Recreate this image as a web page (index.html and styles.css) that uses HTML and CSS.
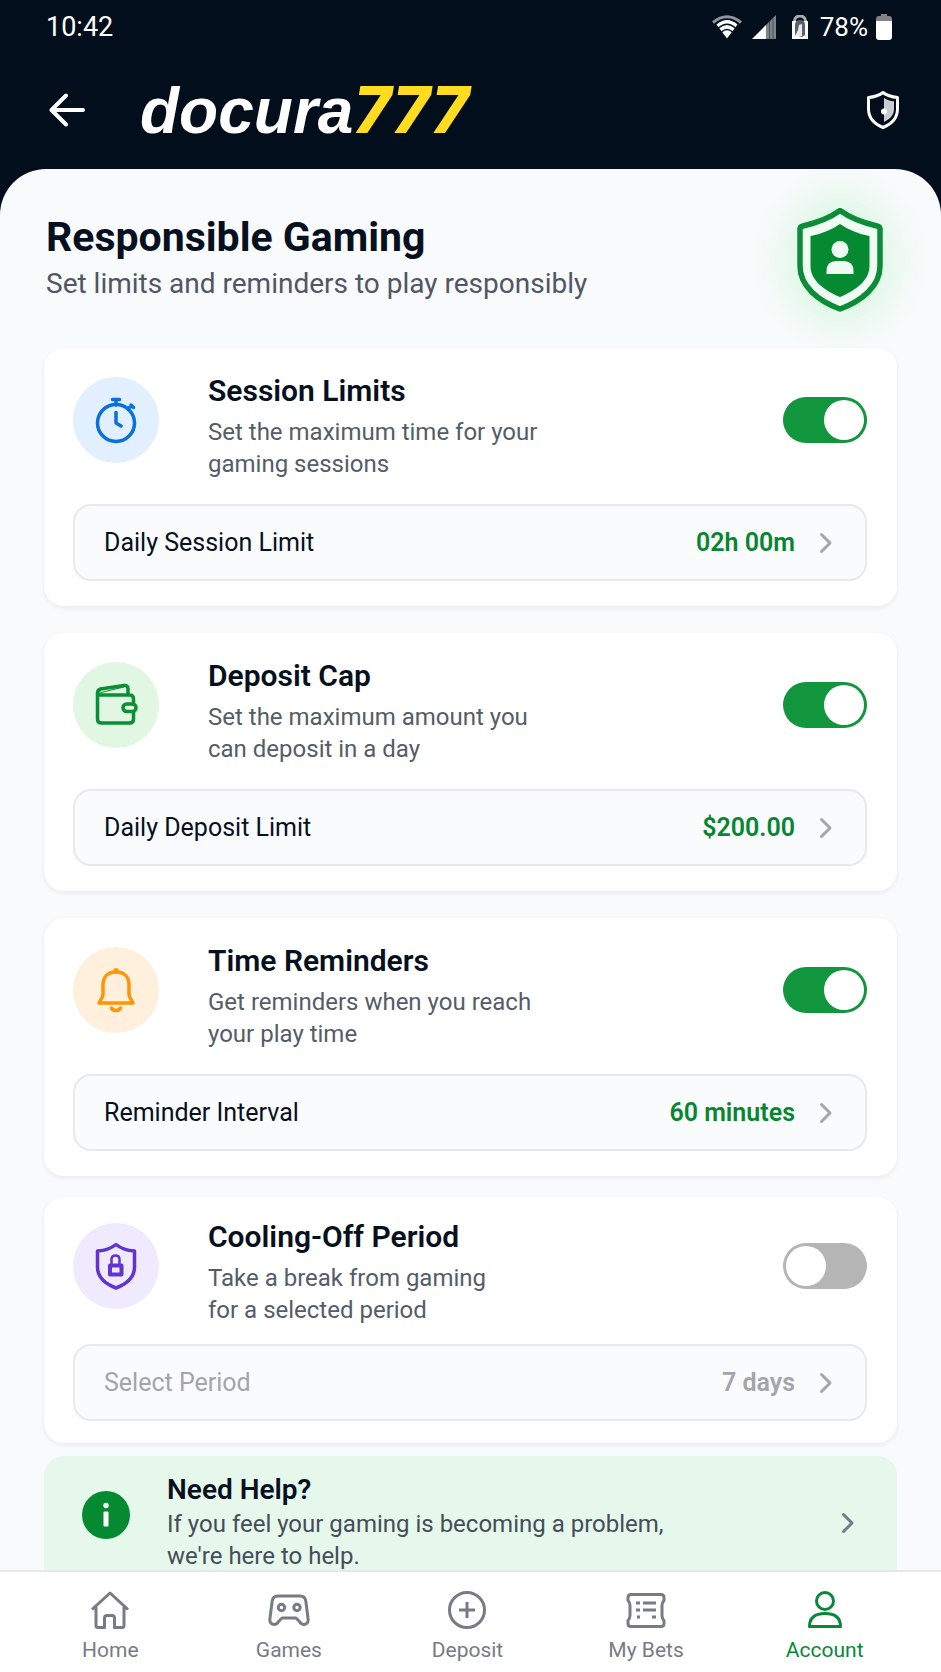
FILE: index.html
```html
<!DOCTYPE html>
<html lang="en">

<head>
    <meta charset="UTF-8">
    <meta name="viewport" content="width=device-width, initial-scale=1.0">
    <title>Responsible Gaming - docura777</title>
    <link rel="stylesheet" href="styles.css">
</head>

<body>
    <!-- Phone status bar -->
    <div class="status-bar">
        <span class="time">10:42</span>
        <div class="status-icons">
            <svg class="wifi" width="30" height="24" viewBox="0 0 30 24" fill="none">
                <path d="M1 7.500Q15-4 29 7.500" stroke="#8f959d" stroke-width="3" />
                <path d="M4.500 9.500Q15 .500 25.500 9.500L15 23.500z" fill="#fff" />
                <path d="M6.500 13Q15 5.500 23.500 13M9.500 17Q15 12 20.500 17" stroke="#04101f" stroke-width="1.300" />
            </svg>
            <svg class="signal" width="26" height="24" viewBox="0 0 26 24">
                <path d="M25 0v24H12V13z" fill="#7d838c" />
                <path d="M15 10v14H1z" fill="#fff" />
                <path d="M18.500 7v17M22 4v20" stroke="#4c535e" stroke-width="1" />
            </svg>
            <svg class="battery-saver" width="18" height="25" viewBox="0 0 18 25">
                <path d="M3.500 6a5.500 5 0 0 1 11 0" fill="none" stroke="#a9adb3" stroke-width="3" />
                <path d="M1 6h16v18H1z" fill="#fff" />
                <path d="M4 20V10q0-5 5-5t5 5v10l-3 2z" fill="#59616c" />
                <path d="M4 21l3-6 1-5 3-1v12z" fill="#e8e9eb" />
            </svg>
            <span>78%</span>
            <svg class="battery" width="16" height="26" viewBox="0 0 16 26">
                <path d="M5 0h6v2h2a3 3 0 0 1 3 3v3H0V5a3 3 0 0 1 3-3h2z" fill="#858087" />
                <path d="M0 7h16v16a3 3 0 0 1-3 3H3a3 3 0 0 1-3-3z" fill="#fff" />
            </svg>
        </div>
    </div>

    <!-- App header -->
    <header class="top-bar">
        <button class="icon-btn back" aria-label="Back">
            <svg width="36" height="34" viewBox="0 0 36 34" fill="none" stroke="#fff" stroke-width="4" stroke-linecap="round" stroke-linejoin="round">
                <path d="M34 17H3M17 2.500L2.500 17 17 31.500" />
            </svg>
        </button>
        <a class="logo" href="#">docura<span>777</span></a>
        <button class="icon-btn" aria-label="Security">
            <svg width="34" height="40" viewBox="0 0 34 40" fill="none">
                <path d="M17 2.500c4 3.200 9 4.500 14.500 5V19c0 9-6 15-14.500 18.500C8.500 34 2.500 28 2.500 19V7.500C8 7 13 5.700 17 2.500z" stroke="#fff" stroke-width="3" stroke-linejoin="round" />
                <path d="M18 8c3 2 6 3 10 3.300V19c0 6-4 10-10 13z" fill="#c9ccd1" />
                <circle cx="18" cy="21.500" r="3" fill="#fff" />
            </svg>
        </button>
    </header>

    <!-- Main content -->
    <main class="sheet">
        <section class="hero">
            <div class="hero-text">
                <h1>Responsible Gaming</h1>
                <p>Set limits and reminders to play responsibly</p>
            </div>
            <div class="hero-shield">
                <svg width="86" height="104" viewBox="0 0 86 104">
                    <path d="M43 2.500C54 10.500 67 15 80 18q3 .700 3 3v37c0 20-18 35-40 43C21 93 3 78 3 58V21q0-2.300 3-3C19 15 32 10.500 43 2.500z" fill="#effcf3" stroke="#0d8c38" stroke-width="5.500" stroke-linejoin="round" />
                    <path d="M43 16c9 6 19 10 29.500 12v30c0 14-13 24-29.500 31C26.500 82 13.500 72 13.500 58V28C24 26 34 22 43 16z" fill="#068a31" />
                    <circle cx="43" cy="41.500" r="8.500" fill="#effcf3" />
                    <path d="M29.500 66v-3q0-10 10-10h7q10 0 10 10v3z" fill="#effcf3" />
                </svg>
            </div>
        </section>

        <section class="card">
            <div class="card-head">
                <div class="card-icon blue">
                    <svg width="42" height="48" viewBox="0 0 42 48" fill="none" stroke="#0a70dc" stroke-width="3.500" stroke-linecap="round">
                        <circle cx="21" cy="27" r="18.500" />
                        <path d="M17.500 3.500h7M21 4v5M36 9l2.500 2.500M33 13l3-3" />
                        <path d="M21 16.500V27l5 3" stroke-linejoin="round" />
                    </svg>
                </div>
                <div class="card-text">
                    <h2 id="session-title">Session Limits</h2>
                    <p>Set the maximum time for your<br>gaming sessions</p>
                </div>
                <input class="toggle" type="checkbox" aria-labelledby="session-title" checked>
            </div>
            <button class="field">
                <span>Daily Session Limit</span>
                <span class="value">02h 00m</span>
                <svg class="chevron" width="14" height="22" viewBox="0 0 14 22"><path d="M2.500 2.500L11 11l-8.500 8.500" /></svg>
            </button>
        </section>

        <section class="card">
            <div class="card-head">
                <div class="card-icon green">
                    <svg width="44" height="44" viewBox="0 0 44 44" fill="none" stroke="#0a8f35" stroke-width="3.500" stroke-linejoin="round">
                        <path d="M3.500 12h32q4 0 4 4v7m0 6v7q0 4-4 4h-28q-4 0-4-4V10q0-3 3-4L30 2.500q4-.500 4 3.500v5" />
                        <path d="M5 10L30 4" stroke-width="1" />
                        <rect x="29" y="21" width="13" height="7.500" rx="3.700" />
                    </svg>
                </div>
                <div class="card-text">
                    <h2 id="deposit-title">Deposit Cap</h2>
                    <p>Set the maximum amount you<br>can deposit in a day</p>
                </div>
                <input class="toggle" type="checkbox" aria-labelledby="deposit-title" checked>
            </div>
            <button class="field">
                <span>Daily Deposit Limit</span>
                <span class="value">$200.00</span>
                <svg class="chevron" width="14" height="22" viewBox="0 0 14 22"><path d="M2.500 2.500L11 11l-8.500 8.500" /></svg>
            </button>
        </section>

        <section class="card">
            <div class="card-head">
                <div class="card-icon orange">
                    <svg width="40" height="46" viewBox="0 0 40 46" fill="none" stroke="#ff9500" stroke-width="3.500" stroke-linecap="round" stroke-linejoin="round">
                        <path d="M20 5C11 5 7 11 7 18v9q0 3-2 5.500L3 36h34l-2-3.500Q33 30 33 27v-9C33 11 29 5 20 5z" />
                        <path d="M19 3h2" />
                        <path d="M15.500 41q1.500 2.500 4.500 2.500t4.500-2.500" />
                    </svg>
                </div>
                <div class="card-text">
                    <h2 id="reminder-title">Time Reminders</h2>
                    <p>Get reminders when you reach<br>your play time</p>
                </div>
                <input class="toggle" type="checkbox" aria-labelledby="reminder-title" checked>
            </div>
            <button class="field">
                <span>Reminder Interval</span>
                <span class="value">60 minutes</span>
                <svg class="chevron" width="14" height="22" viewBox="0 0 14 22"><path d="M2.500 2.500L11 11l-8.500 8.500" /></svg>
            </button>
        </section>

        <section class="card compact">
            <div class="card-head">
                <div class="card-icon purple">
                    <svg width="42" height="48" viewBox="0 0 42 48" fill="none" stroke="#6233d3" stroke-width="3.500" stroke-linejoin="round">
                        <path d="M21 2.500c5 4 11 6 18.500 6.500V25c0 10-8 17-18.500 21C10.500 42 2.500 35 2.500 25V9C10 8.500 16 6.500 21 2.500z" />
                        <path d="M16.500 22v-4.500q0-4 4-4t4 4V22" stroke-width="2.500" />
                        <path d="M15 23.500h11.500v9H15z" stroke-width="4" />
                    </svg>
                </div>
                <div class="card-text">
                    <h2 id="cooling-title">Cooling-Off Period</h2>
                    <p>Take a break from gaming<br>for a selected period</p>
                </div>
                <input class="toggle" type="checkbox" aria-labelledby="cooling-title">
            </div>
            <button class="field" disabled>
                <span>Select Period</span>
                <span class="value">7 days</span>
                <svg class="chevron" width="14" height="22" viewBox="0 0 14 22"><path d="M2.500 2.500L11 11l-8.500 8.500" /></svg>
            </button>
        </section>

        <a class="help" href="#">
            <svg class="help-icon" width="48" height="48" viewBox="0 0 48 48">
                <circle cx="24" cy="24" r="24" fill="#058a32" />
                <circle cx="24" cy="14.500" r="2.700" fill="#fff" />
                <rect x="21.500" y="20.500" width="5" height="15" rx="1" fill="#fff" />
            </svg>
            <div class="help-text">
                <h2>Need Help?</h2>
                <p>If you feel your gaming is becoming a problem,<br>we're here to help.</p>
            </div>
            <svg class="chevron" width="14" height="22" viewBox="0 0 14 22"><path d="M2.500 2.500L11 11l-8.500 8.500" /></svg>
        </a>
    </main>

    <!-- Bottom navigation -->
    <nav class="bottom-nav">
        <a href="#">
            <svg width="42" height="40" viewBox="0 0 42 40">
                <path d="M3 19.500L21 3l18 16.500M7 17v18.500q0 2 2 2h6.500V28q0-2.500 2.500-2.500h5q2.500 0 2.500 2.500v9.500H33q2 0 2-2V17" />
            </svg>
            Home
        </a>
        <a href="#">
            <svg width="42" height="40" viewBox="0 0 42 40">
                <path d="M10 6h22q5 0 5.800 5L40 28q1 6-4 6.500-3 0-4.500-3L28 28H14l-3.500 3.500q-1.500 3-4.500 3-5-.500-4-6.500l2.200-17Q5 6 10 6z" />
                <circle cx="13.500" cy="17.500" r="3.200" />
                <circle cx="29" cy="17.500" r="3.200" />
            </svg>
            Games
        </a>
        <a href="#">
            <svg width="42" height="40" viewBox="0 0 42 40">
                <circle cx="21" cy="20" r="17.500" />
                <path d="M21 12v16M13 20h16" />
            </svg>
            Deposit
        </a>
        <a href="#">
            <svg width="42" height="40" viewBox="0 0 42 40">
                <path d="M6 4.500h30q3 0 3 3v3q-2 2-2 5v10q0 3 2 5v3q0 3-3 3H6q-3 0-3-3v-3q2-2 2-5v-10q0-3-2-5v-3q0-3 3-3z" />
                <path d="M11 13h4M18 13h13M11 20h4M18 20h13M12 27h3M27 27h4" />
            </svg>
            My Bets
        </a>
        <a class="active" href="#">
            <svg width="42" height="40" viewBox="0 0 42 40">
                <circle cx="21" cy="11" r="8.500" />
                <path d="M5.500 36.500q0-13 15.500-13t15.500 13z" />
            </svg>
            Account
        </a>
    </nav>
</body>

</html>
```

FILE: styles.css
```css
/* Basic Reset */
* {
    margin: 0;
    padding: 0;
    box-sizing: border-box;
}

body {
    font-family: Roboto, "Liberation Sans", sans-serif;
    background-color: #030e1d;
    color: #06101f;
    height: 100vh;
    display: flex;
    flex-direction: column;
}

svg {
    display: block;
    flex-shrink: 0;
}

button {
    font-family: inherit;
    border: none;
    background: none;
    cursor: pointer;
}

a {
    color: inherit;
    text-decoration: none;
}

/* Status bar */
.status-bar {
    display: flex;
    justify-content: space-between;
    align-items: center;
    padding: 12px 49px 0 46px;
    height: 42px;
    color: #fff;
    font-size: 26px;
    line-height: 30px;
}

.time {
    font-size: 27px;
}

.status-icons {
    display: flex;
    align-items: center;
}

.signal {
    margin-left: 9px;
}

.battery-saver {
    margin: 0 11px 0 14px;
}

.battery {
    margin-left: 8px;
}

/* Header */
.top-bar {
    display: flex;
    align-items: center;
    height: 127px;
    padding: 18px 41px 9px 49px;
    flex-shrink: 0;
}

.icon-btn {
    display: block;
}

.back {
    margin-right: 55px;
}

.logo {
    flex: 1;
    font-family: "Liberation Sans", Arial, sans-serif;
    font-size: 64px;
    font-weight: 700;
    font-style: italic;
    line-height: 64px;
    color: #fff;
}

.logo span {
    font-family: Inter, "Liberation Sans", sans-serif;
    font-weight: 800;
    color: #ffdc1f;
}

/* Sheet */
.sheet {
    flex: 1;
    min-height: 0;
    overflow-y: auto;
    scrollbar-width: none;
    background-color: #f9fafc;
    border-radius: 46px 46px 0 0;
    padding: 39px 44px 24px;
}

.hero {
    display: flex;
    justify-content: space-between;
    align-items: flex-start;
    padding: 0 14px 0 2px;
    margin-bottom: 36px;
}

.hero-text {
    padding-top: 6px;
}

.hero h1 {
    font-size: 41px;
    font-weight: 700;
    line-height: 46px;
    margin-bottom: 7px;
}

.hero p {
    font-size: 28px;
    line-height: 33px;
    color: #4f5664;
}

.hero-shield {
    border-radius: 50%;
    background-color: #dcf8e3;
    box-shadow: 0 0 36px 18px #e0f8e7;
}

/* Setting cards */
.card {
    background-color: #fff;
    border-radius: 20px;
    padding: 29px 30px 25px 29px;
    margin-bottom: 27px;
    box-shadow: 0 2px 5px rgba(20, 30, 60, 0.07);
}

.card-head {
    display: flex;
    align-items: flex-start;
    margin-bottom: 24px;
}

.card-icon {
    width: 86px;
    height: 86px;
    border-radius: 50%;
    display: flex;
    align-items: center;
    justify-content: center;
    flex-shrink: 0;
}

.blue {
    background-color: #e1efff;
}

.green {
    background-color: #e1f7e3;
}

.orange {
    background-color: #fff0dd;
}

.purple {
    background-color: #f0eaff;
}

.card-text {
    flex: 1;
    padding-left: 49px;
}

.card h2 {
    font-size: 30px;
    font-weight: 600;
    line-height: 28px;
    margin-bottom: 11px;
}

.card p {
    font-size: 24px;
    line-height: 32px;
    color: #555c69;
}

/* Toggle switch */
.toggle {
    appearance: none;
    width: 84px;
    height: 46px;
    margin-top: 20px;
    padding: 3px;
    border-radius: 23px;
    background-color: #b5b5b5;
    display: flex;
    flex-shrink: 0;
    cursor: pointer;
}

.toggle::before {
    content: "";
    width: 40px;
    height: 40px;
    border-radius: 50%;
    background-color: #fff;
}

.toggle:checked {
    background-color: #12963d;
    justify-content: flex-end;
}

/* Value row */
.field {
    display: flex;
    align-items: center;
    width: 100%;
    height: 77px;
    padding: 0 32px 0 29px;
    border: 2px solid #e7e9ee;
    border-radius: 18px;
    background-color: #fafbfc;
    color: #06101f;
    font-size: 25px;
}

.value {
    margin-left: auto;
    margin-right: 24px;
    font-weight: 600;
    color: #078632;
}

.chevron {
    fill: none;
    stroke: #a3a6ae;
    stroke-width: 3;
    stroke-linecap: round;
    stroke-linejoin: round;
}

.field:disabled,
.field:disabled .value {
    color: #a1a5ad;
    cursor: default;
}

.card:has(+ .compact) {
    margin-bottom: 21px;
}

.compact {
    padding-top: 26px;
    padding-bottom: 22px;
    margin-bottom: 13px;
}

.compact .card-head {
    margin-bottom: 18px;
}

/* Help banner */
.help {
    display: flex;
    align-items: center;
    padding: 17px 42px 17px 38px;
    border-radius: 20px;
    background-color: #e6f7eb;
}

.help-icon {
    align-self: flex-start;
    margin-top: 18px;
}

.help-text {
    flex: 1;
    padding-left: 37px;
}

.help h2 {
    font-size: 28px;
    font-weight: 600;
    line-height: 33px;
    margin-bottom: 2px;
}

.help p {
    font-size: 24px;
    line-height: 32px;
    color: #454d59;
}

.help .chevron {
    stroke: #757b86;
}

/* Bottom navigation */
.bottom-nav {
    display: flex;
    flex-shrink: 0;
    height: 102px;
    padding: 18px 27px 0 21px;
    border-top: 2px solid #e5e7eb;
    background-color: #fff;
}

.bottom-nav a {
    flex: 1;
    display: flex;
    flex-direction: column;
    align-items: center;
    gap: 8px;
    color: #767b86;
    font-size: 21px;
    line-height: 25px;
}

.bottom-nav svg {
    fill: none;
    stroke: currentColor;
    stroke-width: 3;
    stroke-linejoin: round;
}

.bottom-nav .active {
    color: #07893a;
}
```
